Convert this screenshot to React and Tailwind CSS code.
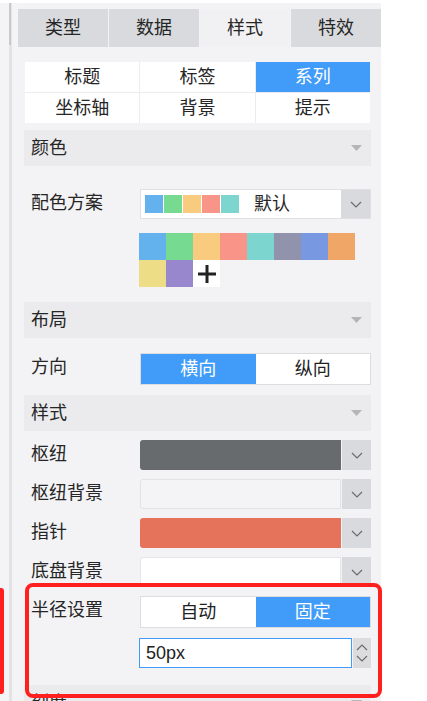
import React from 'react';

const palette = [
  'bg-[#63b2ee]',
  'bg-[#76da91]',
  'bg-[#f8cb7f]',
  'bg-[#f89588]',
  'bg-[#7cd6cf]',
  'bg-[#9192ab]',
  'bg-[#7898e1]',
  'bg-[#efa666]',
  'bg-[#eddd86]',
  'bg-[#9987ce]',
];

const Chevron = ({ up }) => (
  <svg width="12" height="7" viewBox="0 0 12 7">
    <path
      d={up ? 'M1 6l5-5 5 5' : 'M1 1l5 5 5-5'}
      fill="none"
      stroke="#6b6b6b"
      strokeWidth="1.2"
    />
  </svg>
);

const Caret = () => (
  <svg width="11" height="6" viewBox="0 0 11 6">
    <path d="M0 0h11L5.5 6z" fill="#b5b5b7" />
  </svg>
);

function Header({ title, className = '' }) {
  return (
    <div className={`flex h-[36px] items-center justify-between bg-[#ebebed] pl-[7px] pr-[9px] ${className}`}>
      <span>{title}</span>
      <Caret />
    </div>
  );
}

function Row({ label, className = '', children }) {
  return (
    <div className={`flex items-start ${className}`}>
      <div className="w-[116px] shrink-0 pl-[7px] leading-[28px]">{label}</div>
      <div className="flex-1">{children}</div>
    </div>
  );
}

function ColorSelect({ field }) {
  return (
    <div className="flex h-[30px] gap-px">
      <div className={`flex-1 rounded-l-[3px] ${field}`} />
      <div className="flex w-[29px] items-center justify-center bg-[#d9dadd]">
        <Chevron />
      </div>
    </div>
  );
}

function Segmented({ items, active }) {
  return (
    <div className="grid h-[32px] grid-cols-2 border border-[#dcdcde] bg-white">
      {items.map((t, i) => (
        <div
          key={t}
          className={`flex items-center justify-center ${i === active ? 'bg-[#419cf9] text-white' : 'text-[#222]'}`}
        >
          {t}
        </div>
      ))}
    </div>
  );
}

export default function App() {
  const tabs = ['类型', '数据', '样式', '特效'];
  const subTabs = ['标题', '标签', '系列', '坐标轴', '背景', '提示'];

  return (
    <div className="relative h-[701px] w-[427px] overflow-hidden bg-white font-['Liberation_Sans','Noto_Sans_CJK_SC',sans-serif] text-[18px] text-[#262626]">
      <div className="flex pt-[3px]">
        {/* left strip with scrollbar */}
        <div className="relative h-[698px] w-[18px] shrink-0 bg-[#f4f4f6]">
          <div className="absolute left-[9px] top-0 h-full w-[3px] bg-[#e3e3e5]" />
          <div className="absolute left-[9px] top-0 h-[42px] w-[2px] bg-[#c9c9cb]" />
        </div>

        <div className="w-[363px] shrink-0 bg-[#f3f3f5] pt-[6px]">
          {/* tabs */}
          <div className="grid h-[38px] grid-cols-4 gap-px">
            {tabs.map((t) => (
              <div
                key={t}
                className={`flex items-center justify-center ${t === '样式' ? 'bg-[#f1f1f3]' : 'bg-[#d9dadd]'}`}
              >
                {t}
              </div>
            ))}
          </div>

          <div className="pl-[6px] pr-[10px]">
            {/* sub tabs */}
            <div className="mx-px mt-[15px] grid grid-cols-3 gap-px bg-[#ececee]">
              {subTabs.map((t) => (
                <div
                  key={t}
                  className={`flex h-[30px] items-center justify-center ${t === '系列' ? 'bg-[#419cf9] text-white' : 'bg-white'}`}
                >
                  {t}
                </div>
              ))}
            </div>

            <Header title="颜色" className="mt-[7px] h-[35px]" />

            <Row label="配色方案" className="mt-[23px]">
              <div className="flex h-[30px] border border-[#e0e0e2] bg-white">
                <div className="flex flex-1 items-center pl-[4px]">
                  <div className="flex gap-[1px]">
                    {palette.slice(0, 5).map((c) => (
                      <div key={c} className={`h-[18px] w-[18px] ${c}`} />
                    ))}
                  </div>
                  <span className="ml-[15px]">默认</span>
                </div>
                <div className="flex w-[29px] items-center justify-center bg-[#d9dadd]">
                  <Chevron />
                </div>
              </div>
            </Row>

            <Row className="mt-[14px]">
              <div className="-ml-px grid w-[216px] grid-cols-8">
                {palette.map((c) => (
                  <div key={c} className={`h-[27px] w-[27px] ${c}`} />
                ))}
                <div className="flex h-[27px] w-[27px] items-center justify-center bg-white">
                  <svg width="20" height="20" viewBox="0 0 20 20">
                    <rect x="8.5" y="1" width="3" height="18" fill="#222" />
                    <rect x="1" y="8.5" width="18" height="3" fill="#222" />
                  </svg>
                </div>
              </div>
            </Row>

            <Header title="布局" className="mt-[15px]" />

            <Row label="方向" className="mt-[15px]">
              <Segmented items={['横向', '纵向']} active={0} />
            </Row>

            <Header title="样式" className="mt-[10px]" />

            <Row label="枢纽" className="mt-[9px]">
              <ColorSelect field="bg-[#686b6e]" />
            </Row>
            <Row label="枢纽背景" className="mt-[9px]">
              <ColorSelect field="border border-[#e2e2e4] bg-[#f4f4f6]" />
            </Row>
            <Row label="指针" className="mt-[9px]">
              <ColorSelect field="bg-[#e5725a]" />
            </Row>
            <Row label="底盘背景" className="mt-[9px]">
              <ColorSelect field="border border-[#e6e6e8] bg-white" />
            </Row>

            <Row label="半径设置" className="mt-[9px]">
              <div className="flex flex-col gap-[10px]">
                <Segmented items={['自动', '固定']} active={1} />
                <div className="flex h-[30px] gap-px">
                  <div className="-ml-px flex flex-1 items-center border border-[#419cf9] bg-white pl-[6px] text-[#222]">
                    50px
                  </div>
                  <div className="flex w-[18px] flex-col items-center justify-center gap-[4px] bg-[#dcdcde]">
                    <Chevron up />
                    <Chevron />
                  </div>
                </div>
              </div>
            </Row>

            <Header title="刻度" className="mt-[17px]" />
          </div>
        </div>
      </div>

      {/* highlight boxes */}
      <div className="absolute left-[25px] top-[583px] h-[115px] w-[357px] rounded-[8px] border-[4px] border-[#ff1f1f]" />
      <div className="absolute left-0 top-[588px] h-[106px] w-[4px] rounded-r-[3px] bg-[#ff1f1f]" />
    </div>
  );
}
